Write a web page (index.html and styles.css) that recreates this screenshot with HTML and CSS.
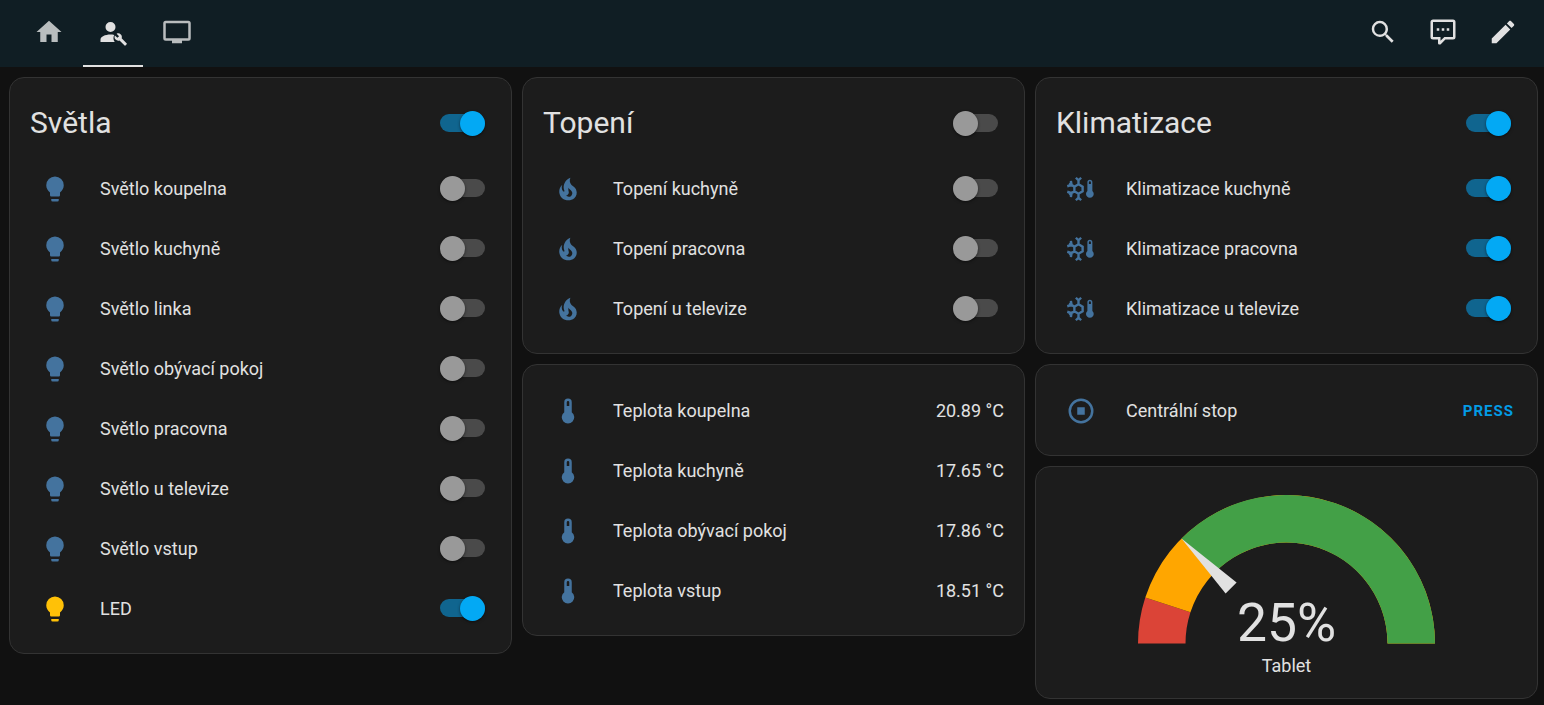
FILE: index.html
```
<!DOCTYPE html>
<html lang="cs">
<head>
<meta charset="utf-8">
<meta name="viewport" content="width=device-width, initial-scale=1">
<title>Tablet</title>
<link rel="stylesheet" href="styles.css">
</head>
<body>
<svg class="sprite" aria-hidden="true">
  <symbol id="home" viewBox="0 0 24 24"><path d="M10,20V14H14V20H19V12H22L12,3L2,12H5V20H10Z"/></symbol>
  <symbol id="account-wrench" viewBox="0 0 24 24"><path d="M10,4A4,4 0 1,0 10,12A4,4 0 1,0 10,4M10,14C5.6,14 2,15.8 2,18V20H13.4C12.2,18.3 12,16 13,14.3C12.1,14.1 11.1,14 10,14Z"/><path transform="translate(12.8 12.6) scale(.45)" d="M22.7,19L13.6,9.9C14.5,7.6 14,4.9 12.1,3C10.1,1 7.1,.6 4.7,1.7L9,6L6,9L1.6,4.7C.4,7.1 .9,10.1 2.9,12.1C4.8,14 7.5,14.5 9.8,13.6L18.9,22.7C19.3,23.1 19.9,23.1 20.3,22.7L22.6,20.4C23.1,20 23.1,19.3 22.7,19Z"/></symbol>
  <symbol id="television" viewBox="0 0 24 24"><path d="M21,17H3V5H21M21,3H3A2,2 0 0,0 1,5V17A2,2 0 0,0 3,19H8V21H16V19H21A2,2 0 0,0 23,17V5A2,2 0 0,0 21,3Z"/></symbol>
  <symbol id="magnify" viewBox="0 0 24 24"><path d="M9.5,3A6.5,6.5 0 0,1 16,9.5C16,11.11 15.41,12.59 14.44,13.73L14.71,14H15.5L20.5,19L19,20.5L14,15.5V14.71L13.73,14.44C12.59,15.41 11.11,16 9.5,16A6.5,6.5 0 0,1 3,9.5A6.5,6.5 0 0,1 9.5,3M9.5,5C7,5 5,7 5,9.5C5,12 7,14 9.5,14C12,14 14,12 14,9.5C14,7 12,5 9.5,5Z"/></symbol>
  <symbol id="comment" viewBox="0 0 24 24"><path d="M9,22A1,1 0 0,1 8,21V18H4A2,2 0 0,1 2,16V4C2,2.89 2.9,2 4,2H20A2,2 0 0,1 22,4V16A2,2 0 0,1 20,18H13.9L10.2,21.71C10,21.9 9.75,22 9.5,22V22H9M10,16V19.08L13.08,16H20V4H4V16H10M17,11H15V9H17V11M13,11H11V9H13V11M9,11H7V9H9V11Z"/></symbol>
  <symbol id="pencil" viewBox="0 0 24 24"><path d="M20.71,7.04C21.1,6.65 21.1,6 20.71,5.63L18.37,3.29C18,2.9 17.35,2.9 16.96,3.29L15.12,5.12L18.87,8.87M3,17.25V21H6.75L17.81,9.93L14.06,6.18L3,17.25Z"/></symbol>
  <symbol id="bulb" viewBox="0 0 24 24"><path d="M12,2A7,7 0 0,0 5,9C5,11.38 6.19,13.47 8,14.74V17A1,1 0 0,0 9,18H15A1,1 0 0,0 16,17V14.74C17.81,13.47 19,11.38 19,9A7,7 0 0,0 12,2M9,21A1,1 0 0,0 10,22H14A1,1 0 0,0 15,21V20H9V21Z"/></symbol>
  <symbol id="fire" viewBox="0 0 24 24"><path d="M17.66 11.2C17.43 10.9 17.15 10.64 16.89 10.38C16.22 9.78 15.46 9.35 14.82 8.72C13.33 7.26 13 4.85 13.95 3C13 3.23 12.17 3.75 11.46 4.32C8.87 6.4 7.85 10.07 9.07 13.22C9.11 13.32 9.15 13.42 9.15 13.55C9.15 13.77 9 13.97 8.8 14.05C8.57 14.15 8.33 14.09 8.14 13.93C8.08 13.88 8.04 13.83 8 13.76C6.87 12.33 6.69 10.28 7.45 8.64C5.78 10 4.87 12.3 5 14.47C5.06 14.97 5.12 15.47 5.29 15.97C5.43 16.57 5.7 17.17 6 17.7C7.08 19.43 8.95 20.67 10.96 20.92C13.1 21.19 15.39 20.8 17.03 19.32C18.86 17.66 19.5 15 18.56 12.72L18.43 12.46C18.22 12 17.66 11.2 17.66 11.2M14.5 17.5C14.22 17.74 13.76 18 13.4 18.1C12.28 18.5 11.16 17.94 10.5 17.28C11.69 17 12.4 16.12 12.61 15.23C12.78 14.43 12.46 13.77 12.33 13C12.21 12.26 12.23 11.63 12.5 10.94C12.69 11.32 12.89 11.7 13.13 12C13.9 13 15.11 13.44 15.37 14.8C15.41 14.94 15.43 15.08 15.43 15.23C15.46 16.05 15.1 16.95 14.5 17.5Z"/></symbol>
  <symbol id="thermometer" viewBox="0 0 24 24"><path d="M15 13V5A3 3 0 0 0 9 5V13A5 5 0 1 0 15 13M12 4A1 1 0 0 1 13 5V8H11V5A1 1 0 0 1 12 4Z"/></symbol>
  <symbol id="snow" viewBox="0 0 24 24"><path fill="none" stroke="currentColor" stroke-width="1.9" d="M10 8.2L13.3 10.1V13.9L10 15.8L6.7 13.9V10.1ZM10 8.2V3.5M10 15.8V20.5M6.7 10.1L2.4 7.6M6.7 13.9L2.4 16.4M7.9 3L10 5.1L12.1 3M7.9 21L10 18.9L12.1 21M3.9 5.5L4.5 8.8L1 9.8M3.9 18.5L4.5 15.2L1 14.2"/><path d="M21.1 13.6V6.5A2 2 0 0 0 17.1 6.5V13.6A3.1 3.1 0 1 0 21.1 13.6M18.3 8V6.5A.8 .8 0 0 1 19.9 6.5V8Z"/></symbol>
  <symbol id="stop" viewBox="0 0 24 24"><path fill-rule="evenodd" d="M12,2A10,10 0 1,0 12,22A10,10 0 1,0 12,2M12,4A8,8 0 1,1 12,20A8,8 0 1,1 12,4M9,9V15H15V9Z"/></symbol>
</svg>

<header class="topbar">
  <nav class="tabs">
    <a class="tab" href="#home" aria-label="Domů"><svg class="icon"><use href="#home"/></svg></a>
    <a class="tab active" href="#control" aria-label="Ovládání" aria-current="page"><svg class="icon"><use href="#account-wrench"/></svg></a>
    <a class="tab" href="#tv" aria-label="Televize"><svg class="icon"><use href="#television"/></svg></a>
  </nav>
  <div class="actions">
    <button class="action" aria-label="Hledat"><svg class="icon"><use href="#magnify"/></svg></button>
    <button class="action" aria-label="Asistent"><svg class="icon"><use href="#comment"/></svg></button>
    <button class="action" aria-label="Upravit"><svg class="icon"><use href="#pencil"/></svg></button>
  </div>
</header>

<main class="board">
  <div class="column">
    <section class="card">
      <div class="card-head"><h2><label for="l0">Světla</label></h2><input class="switch" type="checkbox" id="l0" checked></div>
      <div class="rows">
        <div class="row"><svg class="icon"><use href="#bulb"/></svg><label class="name" for="l1">Světlo koupelna</label><input class="switch" type="checkbox" id="l1"></div>
        <div class="row"><svg class="icon"><use href="#bulb"/></svg><label class="name" for="l2">Světlo kuchyně</label><input class="switch" type="checkbox" id="l2"></div>
        <div class="row"><svg class="icon"><use href="#bulb"/></svg><label class="name" for="l3">Světlo linka</label><input class="switch" type="checkbox" id="l3"></div>
        <div class="row"><svg class="icon"><use href="#bulb"/></svg><label class="name" for="l4">Světlo obývací pokoj</label><input class="switch" type="checkbox" id="l4"></div>
        <div class="row"><svg class="icon"><use href="#bulb"/></svg><label class="name" for="l5">Světlo pracovna</label><input class="switch" type="checkbox" id="l5"></div>
        <div class="row"><svg class="icon"><use href="#bulb"/></svg><label class="name" for="l6">Světlo u televize</label><input class="switch" type="checkbox" id="l6"></div>
        <div class="row"><svg class="icon"><use href="#bulb"/></svg><label class="name" for="l7">Světlo vstup</label><input class="switch" type="checkbox" id="l7"></div>
        <div class="row lit"><svg class="icon"><use href="#bulb"/></svg><label class="name" for="l8">LED</label><input class="switch" type="checkbox" id="l8" checked></div>
      </div>
    </section>
  </div>

  <div class="column">
    <section class="card">
      <div class="card-head"><h2><label for="h0">Topení</label></h2><input class="switch" type="checkbox" id="h0"></div>
      <div class="rows">
        <div class="row"><svg class="icon"><use href="#fire"/></svg><label class="name" for="h1">Topení kuchyně</label><input class="switch" type="checkbox" id="h1"></div>
        <div class="row"><svg class="icon"><use href="#fire"/></svg><label class="name" for="h2">Topení pracovna</label><input class="switch" type="checkbox" id="h2"></div>
        <div class="row"><svg class="icon"><use href="#fire"/></svg><label class="name" for="h3">Topení u televize</label><input class="switch" type="checkbox" id="h3"></div>
      </div>
    </section>
    <section class="card">
      <div class="rows plain">
        <div class="row"><svg class="icon"><use href="#thermometer"/></svg><span class="name">Teplota koupelna</span><span class="value">20.89 °C</span></div>
        <div class="row"><svg class="icon"><use href="#thermometer"/></svg><span class="name">Teplota kuchyně</span><span class="value">17.65 °C</span></div>
        <div class="row"><svg class="icon"><use href="#thermometer"/></svg><span class="name">Teplota obývací pokoj</span><span class="value">17.86 °C</span></div>
        <div class="row"><svg class="icon"><use href="#thermometer"/></svg><span class="name">Teplota vstup</span><span class="value">18.51 °C</span></div>
      </div>
    </section>
  </div>

  <div class="column">
    <section class="card">
      <div class="card-head"><h2><label for="k0">Klimatizace</label></h2><input class="switch" type="checkbox" id="k0" checked></div>
      <div class="rows">
        <div class="row"><svg class="icon"><use href="#snow"/></svg><label class="name" for="k1">Klimatizace kuchyně</label><input class="switch" type="checkbox" id="k1" checked></div>
        <div class="row"><svg class="icon"><use href="#snow"/></svg><label class="name" for="k2">Klimatizace pracovna</label><input class="switch" type="checkbox" id="k2" checked></div>
        <div class="row"><svg class="icon"><use href="#snow"/></svg><label class="name" for="k3">Klimatizace u televize</label><input class="switch" type="checkbox" id="k3" checked></div>
      </div>
    </section>
    <section class="card">
      <div class="rows plain">
        <div class="row"><svg class="icon"><use href="#stop"/></svg><span class="name">Centrální stop</span><button class="press">PRESS</button></div>
      </div>
    </section>
    <section class="card gauge">
      <svg class="dial" viewBox="-50 -50 100 50" role="img" aria-label="25%">
        <path fill="#db4437" d="M-50 0A50 50 0 0 1 -47.55 -15.45L-32.34 -10.51A34 34 0 0 0 -34 0Z"/>
        <path fill="#ffa600" d="M-47.55 -15.45A50 50 0 0 1 50 0H34A34 34 0 0 0 -32.34 -10.51Z"/>
        <path fill="#43a047" d="M-35.36 -35.36A50 50 0 0 1 50 0H34A34 34 0 0 0 -24.04 -24.04Z"/>
        <path fill="#e1e1e1" d="M-35.36 -35.36L-16.8 -20.5L-20.5 -16.8Z"/>
        <text class="reading" x="0" y="-1" text-anchor="middle">25%</text>
      </svg>
      <div class="caption">Tablet</div>
    </section>
  </div>
</main>
</body>
</html>
```
FILE: styles.css
```
* { box-sizing: border-box; }

body {
  margin: 0;
  min-height: 100vh;
  background: #111111;
  color: #e1e1e1;
  font: 18px/24px Roboto, sans-serif;
}

.sprite { position: absolute; width: 0; height: 0; }

.icon {
  flex: none;
  width: 30px;
  height: 30px;
  fill: currentColor;
}

.topbar {
  display: flex;
  justify-content: space-between;
  height: 67px;
  padding: 0 11px 0 19px;
  background: #101e24;
}

.tabs { display: flex; gap: 4px; }

.tab {
  display: flex;
  align-items: center;
  justify-content: center;
  width: 60px;
  padding-bottom: 1px;
  border-bottom: 2px solid transparent;
  color: #b9bdbe;
}

.tab.active { color: #e1e1e1; border-color: #e1e1e1; }

.actions { display: flex; }

.action {
  display: flex;
  align-items: center;
  justify-content: center;
  width: 60px;
  height: 64px;
  padding: 0;
  border: 0;
  background: none;
  color: #e1e1e1;
}

.board {
  display: grid;
  grid-template-columns: repeat(3, minmax(0, 1fr));
  gap: 10px;
  padding: 10px 6px 8px 9px;
}

.column { display: flex; flex-direction: column; gap: 10px; }

.card {
  background: #1c1c1c;
  border: 1px solid #333333;
  border-radius: 15px;
}

.card-head {
  display: flex;
  align-items: center;
  justify-content: space-between;
  padding: 20px 20px 15px;
}

.card-head h2 {
  margin: 0;
  font-size: 30px;
  line-height: 50px;
  font-weight: 400;
}

.rows {
  display: flex;
  flex-direction: column;
  gap: 10px;
  padding: 0 20px 20px;
}

.rows.plain { padding-top: 20px; }

.row { display: flex; align-items: center; height: 50px; }

.row .icon { margin: 2px 30px 0 10px; color: #44739e; }

.row.lit .icon { color: #ffc107; }

.name { flex: 1; }

.name, .value { padding-top: 2px; }

.switch {
  appearance: none;
  display: flex;
  align-items: center;
  width: 45px;
  height: 18px;
  margin: 0 6px 0 0;
  border-radius: 9px;
  background: #4a4a4a;
}

.switch::before {
  content: "";
  flex: none;
  width: 25px;
  height: 25px;
  border-radius: 50%;
  background: #999999;
  box-shadow: 0 1px 3px rgba(0, 0, 0, .5);
}

.switch:checked { justify-content: flex-end; background: #10658f; }

.switch:checked::before { background: #03a9f4; }

.press {
  padding: 12px 3px 10px;
  border: 0;
  background: none;
  color: #039be5;
  font: 700 15px/24px Roboto, sans-serif;
  letter-spacing: 1px;
}

.gauge {
  display: flex;
  flex-direction: column;
  align-items: center;
  padding: 28px 20px 20px;
}

.dial { display: block; width: 65%; max-width: 297px; overflow: visible; }

.reading { font-size: 18px; fill: #e1e1e1; }

.caption { margin-top: 10px; font-size: 18px; }
```
